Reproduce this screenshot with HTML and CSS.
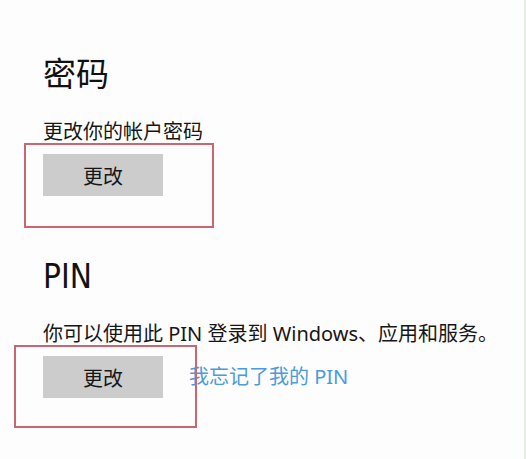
FILE: index.html
```html
<!DOCTYPE html>
<html lang="zh-CN">
<head>
<meta charset="utf-8">
<title>登录选项</title>
<link rel="stylesheet" href="styles.css">
</head>
<body>
<main class="page">
  <section class="section">
    <h2 class="heading">密码</h2>
    <p class="desc">更改你的帐户密码</p>
    <div class="actions">
      <button class="btn" type="button">更改</button>
    </div>
    <div class="mark mark-1"></div>
  </section>
  <section class="section section-pin">
    <h2 class="heading">PIN</h2>
    <p class="desc">你可以使用此 PIN 登录到 Windows、应用和服务。</p>
    <div class="actions">
      <button class="btn" type="button">更改</button>
      <a class="link" href="#">我忘记了我的 PIN</a>
    </div>
    <div class="mark mark-2"></div>
  </section>
</main>
</body>
</html>
```

FILE: styles.css
```css
html, body {
  margin: 0;
  padding: 0;
  background: #fdfdfd;
}

body {
  width: 526px;
  height: 459px;
  overflow: hidden;
  font-family: "Noto Sans", "Noto Sans CJK SC", sans-serif;
  color: #1e1e1e;
}

.page {
  position: relative;
  box-sizing: border-box;
  height: 459px;
  padding: 55px 0 0 43px;
  border-right: 2px solid #e3ece5;
}

.section {
  display: flex;
  flex-direction: column;
  align-items: flex-start;
}

.section-pin {
  margin-top: 61px;
}

.heading {
  margin: 0 0 23px;
  font-family: "DejaVu Sans Condensed", "DejaVu Sans", "Noto Sans CJK SC", sans-serif;
  font-stretch: condensed;
  font-weight: normal;
  font-size: 33px;
  line-height: 40px;
  color: #111;
}

.desc {
  margin: 0 0 8px;
  font-size: 20px;
  line-height: 28px;
  color: #161616;
  white-space: nowrap;
}

.actions {
  display: flex;
  align-items: center;
  gap: 26px;
}

.btn {
  width: 120px;
  height: 42px;
  margin: 0;
  padding: 0;
  border: none;
  background: #cccccc;
  font-family: "Noto Sans", "Noto Sans CJK SC", sans-serif;
  font-size: 20px;
  color: #161616;
}

.link {
  font-size: 20px;
  line-height: 28px;
  color: #4a9bdb;
  text-decoration: none;
}

.mark {
  position: absolute;
  box-sizing: border-box;
  border: 2px solid #c96670;
  pointer-events: none;
}

.mark-1 {
  left: 24px;
  top: 143px;
  width: 190px;
  height: 85px;
}

.mark-2 {
  left: 14px;
  top: 345px;
  width: 183px;
  height: 83px;
}
```
